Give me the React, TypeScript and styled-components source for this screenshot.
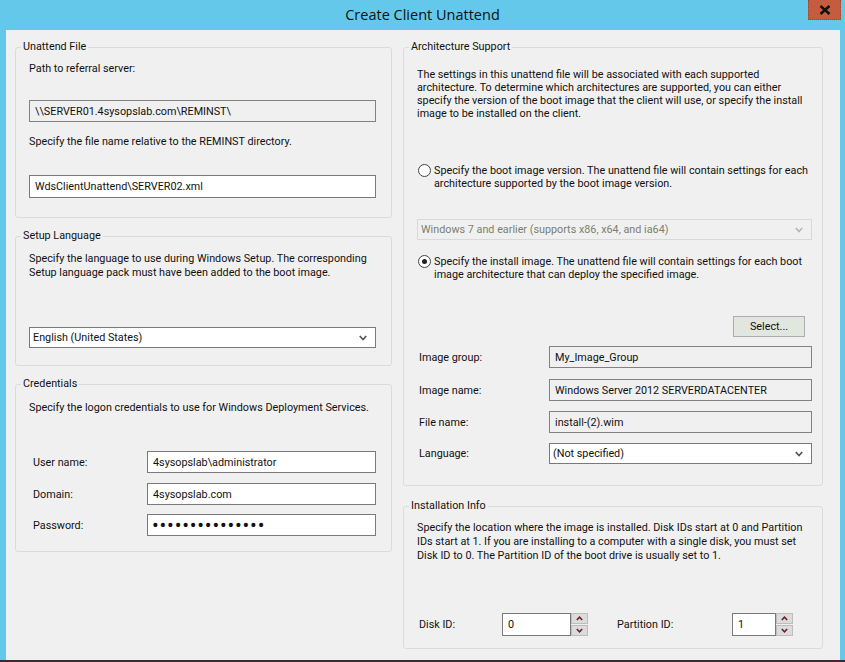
import React from "react";
import styled, { createGlobalStyle } from "styled-components";

const GlobalStyle = createGlobalStyle`
  html, body {
    margin: 0;
    padding: 0;
    background: #3a2c2c;
  }
  body {
    width: 845px;
    height: 662px;
    overflow: hidden;
    font-family: Roboto, "Open Sans", sans-serif;
    font-size: 10.8px;
    color: #111;
  }
`;

const Window = styled.div`
  width: 845px;
  height: 661px;
  background: #64c8ea;
  display: flex;
  flex-direction: column;
`;

const TitleBar = styled.div`
  height: 30px;
  display: grid;
  grid-template-columns: 1fr auto 1fr;
  flex-shrink: 0;
`;

const Title = styled.div`
  grid-column: 2;
  font-family: "Open Sans", sans-serif;
  font-size: 14.5px;
  line-height: 30px;
  color: #111;
`;

const CloseButton = styled.div`
  grid-column: 3;
  justify-self: end;
  width: 33px;
  height: 20px;
  margin-right: 4px;
  background: #c45c3d;
  border: 1px dotted #8a4a38;
  border-top: none;
  box-sizing: border-box;
  display: flex;
  align-items: center;
  justify-content: center;
`;

const Body = styled.div`
  flex: 1;
  margin: 0 5px 0 6px;
  background: #f0f0f0;
  display: grid;
  grid-template-columns: 377px 420px;
  column-gap: 11px;
  padding: 10px 0 0 9px;
  align-content: start;
`;

const Column = styled.div`
  display: flex;
  flex-direction: column;
`;

const Group = styled.fieldset<{ $h: number; $mt?: number; $pr?: number }>`
  box-sizing: border-box;
  height: ${(p) => p.$h}px;
  margin: ${(p) => p.$mt ?? 0}px 0 0 0;
  padding: 0 ${(p) => p.$pr ?? 15}px 0 13px;
  border: 1px solid #d7dcde;
  border-radius: 3px;
  min-width: 0;
  display: flex;
  flex-direction: column;
`;

const Legend = styled.legend`
  margin-left: -8px;
  padding: 0 2px;
  line-height: 14px;
`;

const Text = styled.div<{ $mt?: number; $lh?: number; $ml?: number }>`
  margin-top: ${(p) => p.$mt ?? 0}px;
  margin-left: ${(p) => p.$ml ?? 0}px;
  line-height: ${(p) => p.$lh ?? 14}px;
  white-space: nowrap;
`;

const TextField = styled.input<{ $mt?: number; $h?: number }>`
  box-sizing: border-box;
  display: block;
  width: 100%;
  height: ${(p) => p.$h ?? 22}px;
  margin: ${(p) => p.$mt ?? 0}px 0 0 0;
  padding: 0 5px;
  border: 1px solid #7a7a7a;
  background: #fff;
  font: inherit;
  color: #111;
  outline: none;
  &:read-only {
    background: #f0f0f0;
    border-color: #828282;
  }
`;

const Password = styled(TextField)`
  letter-spacing: 0.8px;
  font-size: 20px;
  padding-left: 4px;
`;

const SelectBox = styled.div<{ $mt?: number; $disabled?: boolean }>`
  box-sizing: border-box;
  height: 21px;
  margin-top: ${(p) => p.$mt ?? 0}px;
  padding: 0 8px 0 3px;
  border: 1px solid ${(p) => (p.$disabled ? "#d9d9d9" : "#7a7a7a")};
  background: ${(p) => (p.$disabled ? "#f0f0f0" : "#fff")};
  color: ${(p) => (p.$disabled ? "#7b7f6e" : "#111")};
  display: flex;
  align-items: center;
  justify-content: space-between;
  white-space: nowrap;
`;

const Chevron = ({ disabled }: { disabled?: boolean }) => (
  <svg width="8" height="6" viewBox="0 0 8 6">
    <path
      d="M0.8 1 L4 4.6 L7.2 1"
      fill="none"
      stroke={disabled ? "#b5b5b5" : "#5a5050"}
      strokeWidth="1.6"
    />
  </svg>
);

const Select = ({
  value,
  mt,
  disabled,
}: {
  value: string;
  mt?: number;
  disabled?: boolean;
}) => (
  <SelectBox $mt={mt} $disabled={disabled}>
    <span>{value}</span>
    <Chevron disabled={disabled} />
  </SelectBox>
);

const FormRow = styled.div<{ $mt?: number; $label: number }>`
  display: grid;
  grid-template-columns: ${(p) => p.$label}px 1fr;
  align-items: center;
  margin-top: ${(p) => p.$mt ?? 0}px;
`;

const RowLabel = styled.span<{ $ml?: number }>`
  margin-left: ${(p) => p.$ml ?? 0}px;
  white-space: nowrap;
`;

const RadioRow = styled.label<{ $mt?: number }>`
  display: flex;
  gap: 3px;
  margin-top: ${(p) => p.$mt ?? 0}px;
  line-height: 13px;
  white-space: nowrap;
`;

const RadioDot = styled.span<{ $checked?: boolean }>`
  box-sizing: border-box;
  flex-shrink: 0;
  width: 13px;
  height: 13px;
  margin: 0 0 0 1px;
  border: 1px solid #444;
  border-radius: 50%;
  background: #fff;
  display: flex;
  align-items: center;
  justify-content: center;
  &::after {
    content: "";
    display: ${(p) => (p.$checked ? "block" : "none")};
    width: 5px;
    height: 5px;
    border-radius: 50%;
    background: #222;
  }
`;

const PushButton = styled.div<{ $mt?: number }>`
  box-sizing: border-box;
  align-self: flex-end;
  width: 72px;
  height: 21px;
  margin: ${(p) => p.$mt ?? 0}px 7px 0 0;
  border: 1px solid #adadad;
  background: #e1e6df;
  display: flex;
  align-items: center;
  justify-content: center;
`;

const SpinRow = styled.div<{ $mt?: number }>`
  display: grid;
  grid-template-columns: 85px 86px 29px 115px 61px;
  align-items: center;
  margin-top: ${(p) => p.$mt ?? 0}px;
`;

const SpinBox = styled.div`
  display: flex;
  height: 23px;
`;

const SpinInput = styled(TextField)`
  flex: 1;
  height: 23px;
  padding-left: 5px;
`;

const SpinButtons = styled.div`
  width: 17px;
  display: flex;
  flex-direction: column;
  gap: 1px;
`;

const SpinArrow = styled.div`
  flex: 1;
  background: #dcdcdc;
  border: 1px solid #bdbdbd;
  display: flex;
  align-items: center;
  justify-content: center;
`;

const Arrow = ({ up }: { up?: boolean }) => (
  <svg width="7" height="5" viewBox="0 0 7 5">
    <path
      d={up ? "M0.8 4 L3.5 1.2 L6.2 4" : "M0.8 1 L3.5 3.8 L6.2 1"}
      fill="none"
      stroke="#6b1e22"
      strokeWidth="1.5"
    />
  </svg>
);

const Spinner = ({ value }: { value: string }) => (
  <SpinBox>
    <SpinInput defaultValue={value} />
    <SpinButtons>
      <SpinArrow>
        <Arrow up />
      </SpinArrow>
      <SpinArrow>
        <Arrow />
      </SpinArrow>
    </SpinButtons>
  </SpinBox>
);

const BottomEdge = styled.div`
  height: 1px;
  background: #3a2c2c;
`;

export default function App() {
  return (
    <>
      <GlobalStyle />
      <Window>
        <TitleBar>
          <Title>Create Client Unattend</Title>
          <CloseButton>
            <svg width="12" height="10" viewBox="0 0 12 10">
              <path d="M1.5 1 L10.5 9 M10.5 1 L1.5 9" stroke="#111" strokeWidth="2.4" />
            </svg>
          </CloseButton>
        </TitleBar>
        <Body>
          <Column>
            <Group $h={178}>
              <Legend>Unattend File</Legend>
              <Text $mt={7} $lh={15}>
                Path to referral server:
              </Text>
              <TextField $mt={24} readOnly value="\\SERVER01.4sysopslab.com\REMINST\" />
              <Text $mt={12} $lh={15}>
                Specify the file name relative to the REMINST directory.
              </Text>
              <TextField $mt={26} $h={23} defaultValue="WdsClientUnattend\SERVER02.xml" />
            </Group>

            <Group $h={137} $mt={11}>
              <Legend>Setup Language</Legend>
              <Text $mt={9}>
                Specify the language to use during Windows Setup. The corresponding
                <br />
                Setup language pack must have been added to the boot image.
              </Text>
              <Select mt={47} value="English (United States)" />
            </Group>

            <Group $h={175} $mt={11}>
              <Legend>Credentials</Legend>
              <Text $mt={10}>
                Specify the logon credentials to use for Windows Deployment Services.
              </Text>
              <FormRow $mt={36} $label={118}>
                <RowLabel $ml={4}>User name:</RowLabel>
                <TextField defaultValue="4sysopslab\administrator" />
              </FormRow>
              <FormRow $mt={10} $label={118}>
                <RowLabel $ml={4}>Domain:</RowLabel>
                <TextField defaultValue="4sysopslab.com" />
              </FormRow>
              <FormRow $mt={9} $label={118}>
                <RowLabel $ml={4}>Password:</RowLabel>
                <Password type="password" defaultValue="123456789012345" />
              </FormRow>
            </Group>
          </Column>

          <Column>
            <Group $h={446} $pr={10}>
              <Legend>Architecture Support</Legend>
              <Text $mt={14} $lh={13}>
                The settings in this unattend file will be associated with each supported
                <br />
                architecture. To determine which architectures are supported, you can either
                <br />
                specify the version of the boot image that the client will use, or specify the install
                <br />
                image to be installed on the client.
              </Text>
              <RadioRow $mt={44}>
                <RadioDot />
                <span>
                  Specify the boot image version. The unattend file will contain settings for each
                  <br />
                  architecture supported by the boot image version.
                </span>
              </RadioRow>
              <Select mt={29} disabled value="Windows 7 and earlier (supports x86, x64, and ia64)" />
              <RadioRow $mt={15}>
                <RadioDot $checked />
                <span>
                  Specify the install image. The unattend file will contain settings for each boot
                  <br />
                  image architecture that can deploy the specified image.
                </span>
              </RadioRow>
              <PushButton $mt={35}>Select...</PushButton>
              <FormRow $mt={9} $label={132}>
                <RowLabel $ml={2}>Image group:</RowLabel>
                <TextField readOnly value="My_Image_Group" />
              </FormRow>
              <FormRow $mt={11} $label={132}>
                <RowLabel $ml={2}>Image name:</RowLabel>
                <TextField readOnly value="Windows Server 2012 SERVERDATACENTER" />
              </FormRow>
              <FormRow $mt={10} $label={132}>
                <RowLabel $ml={2}>File name:</RowLabel>
                <TextField readOnly value="install-(2).wim" />
              </FormRow>
              <FormRow $mt={10} $label={132}>
                <RowLabel $ml={2}>Language:</RowLabel>
                <Select value="(Not specified)" />
              </FormRow>
            </Group>

            <Group $h={150} $mt={13} $pr={10}>
              <Legend>Installation Info</Legend>
              <Text $mt={8} $lh={14}>
                Specify the location where the image is installed. Disk IDs start at 0 and Partition
                <br />
                IDs start at 1. If you are installing to a computer with a single disk, you must set
                <br />
                Disk ID to 0. The Partition ID of the boot drive is usually set to 1.
              </Text>
              <SpinRow $mt={50}>
                <RowLabel $ml={2}>Disk ID:</RowLabel>
                <Spinner value="0" />
                <span />
                <RowLabel>Partition ID:</RowLabel>
                <Spinner value="1" />
              </SpinRow>
            </Group>
          </Column>
        </Body>
        <BottomEdge />
      </Window>
    </>
  );
}
